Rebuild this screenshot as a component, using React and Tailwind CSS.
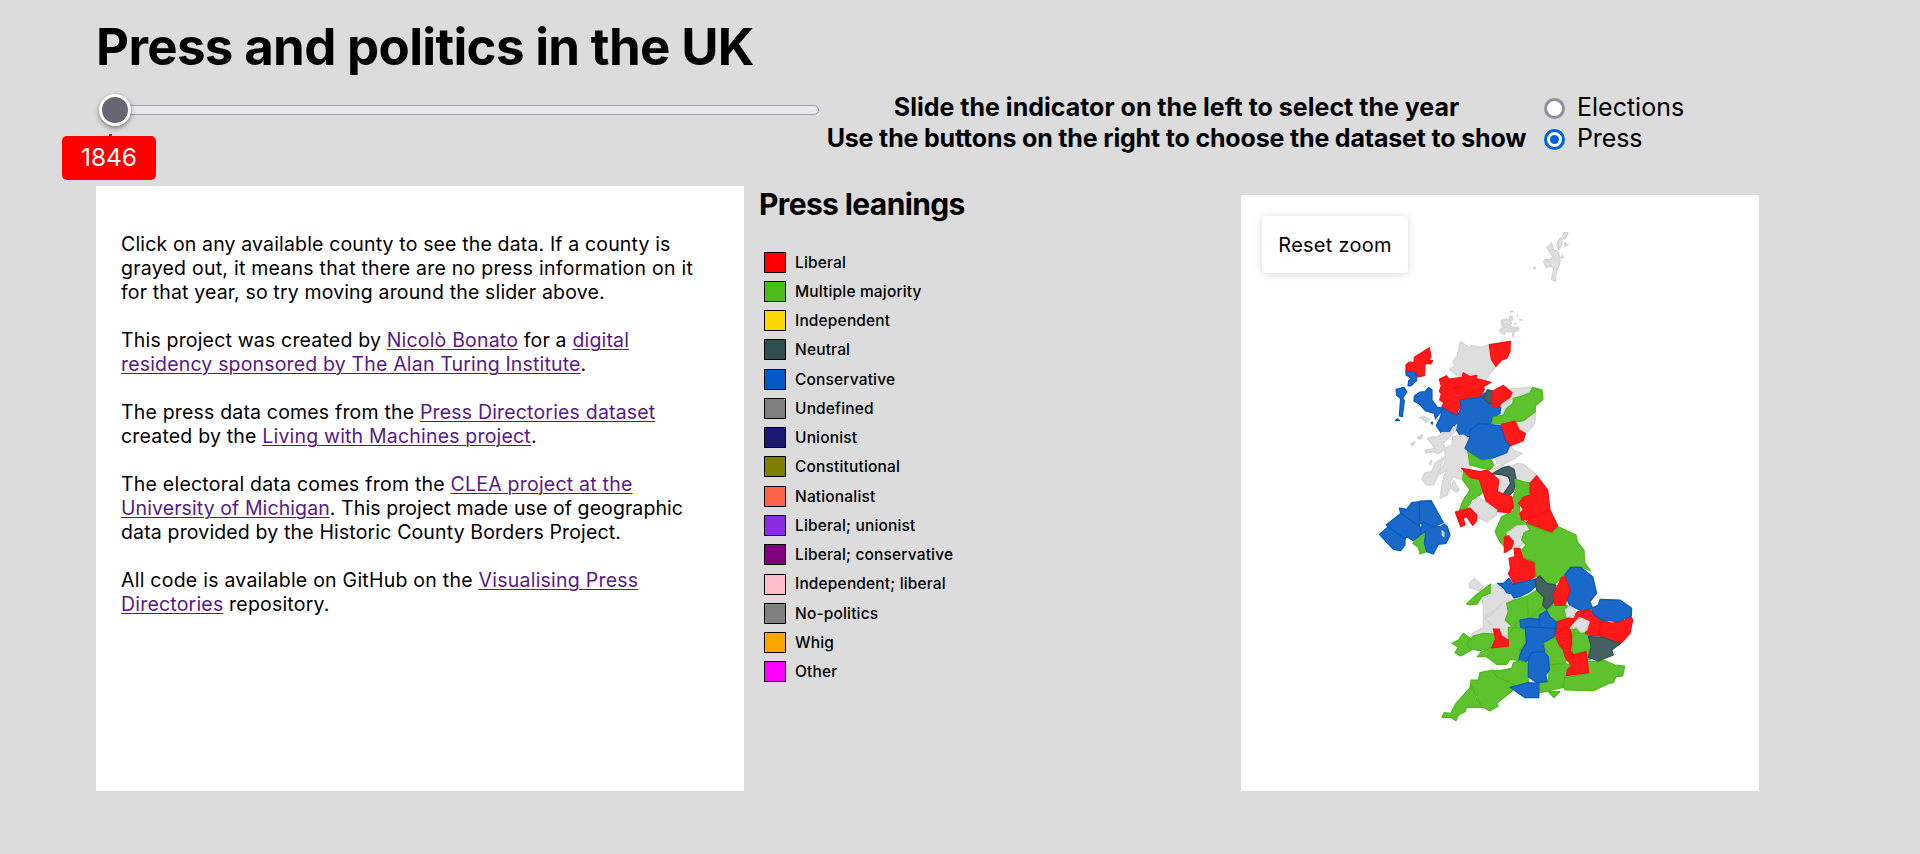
import React from 'react';

const FILL = { r: '#ff1919', b: '#1a69c9', g: '#5ec12e', n: '#446060', x: '#dedede' };
const STROKE = { r: '#ff0a0a', b: '#0059c4', g: '#4cba17', n: '#2f4f4f', x: '#d3d3d3' };

// Each sheet is a part of the map drawn on a grid of thirds of a pixel.
const SHEETS = [
  {
    x: 1240, y: 190, s: 0.338,
    shapes: [
      ['x', '958,126 971,126 960,146 953,140'],
      ['x', '945,143 953,143 952,165 943,177 937,163'],
      ['x', '960,155 971,161 960,168'],
      ['x', '907,168 916,164 922,156 928,178 938,180 947,200 945,222 936,240 933,270 921,265 929,232 918,225 905,228 898,212 905,205 918,206 926,196 914,182'],
      ['x', '949,200 953,193 958,200'],
      ['x', '870,226 875,230 870,235'],
      ['x', '800,358 808,358 808,361 800,361'],
      ['x', '797,374 807,374 807,385 797,385'],
      ['x', '827,382 835,385 828,386'],
      ['x', '810,398 817,393 813,399'],
      ['x', '820,369 821,375'],
      ['x', '773,388 787,380 800,390 798,402 826,411 818,418 785,415 766,418 776,408'],
    ],
  },
  {
    x: 1370, y: 320, s: 1 / 3,
    shapes: [
      ['x', '395,0 420,0 424,10 414,16 398,12'],
      ['x', '396,26 408,22 428,28 446,20 433,32 430,52 426,36 408,34 404,44 392,38'],
      ['x', '271,65 301,84 303,76 332,82 358,74 364,118 378,140 360,160 345,186 290,178 262,167 238,148 254,137 248,124 261,108'],
      ['r', '358,74 421,64 420,95 410,115 395,120 378,139 364,118'],
      ['r', '178,83 183,110 175,122 188,122 182,132 165,130 164,166 145,171 130,158 108,154 108,135 118,126 132,128 133,112'],
      ['b', '108,154 134,155 140,168 140,182 122,198 114,198 116,182 126,176 108,165'],
      ['b', '78,208 102,202 111,216 98,234 103,242 97,290 88,288 92,236 80,226'],
      ['b', '76,302 82,296 89,302'],
      ['b', '183,308 187,306 187,313'],
      ['b', '133,228 150,216 165,215 176,202 186,210 186,240 202,262 219,264 208,282 196,297 193,280 166,272 148,252 132,244'],
      ['x', '148,292 165,290 178,298 170,306 158,298'],
      ['r', '208,178 229,167 237,177 276,172 280,158 300,170 320,166 318,176 363,187 340,200 343,207 332,232 292,235 270,242 274,257 262,275 268,288 215,262 222,248 209,240 214,222 208,214 214,198'],
      ['r', '250,205 275,200 262,206'],
      ['r', '308,212 338,208'],
      ['x', '412,208 484,201 482,215 450,225 440,238 425,240 396,285 382,290 388,255 425,230 426,215'],
      ['x', '470,280 498,278 494,310 475,336 450,330 440,305'],
      ['b', '270,240 330,233 345,218 352,235 378,258 392,262 390,280 365,300 370,312 330,312 300,350 270,346 250,314 236,340 215,342 199,316 212,290 217,264 262,288 274,262'],
      ['n', '352,209 370,214 366,245 358,252 340,236'],
      ['r', '370,212 400,196 426,218 420,232 395,248 388,260 370,262 365,245'],
      ['g', '488,202 516,210 519,238 496,258 496,275 460,302 412,310 365,312 370,292 400,285 410,265 428,250 430,235 450,230 480,218'],
    ],
  },
  {
    x: 1370, y: 420, s: 1 / 3,
    shapes: [
      ['x', '165,90 195,85 172,56 190,50 203,52 215,38 240,38 260,14 256,34 220,70 225,88 205,102 190,95 168,100'],
      ['x', '142,52 156,44 158,52 148,58'],
      ['x', '122,72 134,64 128,78'],
      ['x', '178,128 186,120 182,136'],
      ['x', '248,50 280,45 300,58 285,85 295,125 305,145 275,150 275,180 250,170 240,185 242,200 232,225 210,236 215,200 222,168 230,150 205,166 190,195 170,195 155,178 165,158 185,155 195,130 222,112 205,158 225,128 225,85 245,75'],
      ['x', '252,180 258,195 268,210 258,217 242,205'],
      ['x', '378,115 410,100 420,80 440,95 458,100 425,120 400,134 378,130'],
      ['r', '393,14 435,3 447,30 466,40 460,62 420,78 400,55'],
      ['b', '325,12 390,16 400,40 408,65 420,75 410,98 375,112 335,123 302,100 285,85 300,52 300,30'],
      ['g', '293,95 335,122 362,118 372,135 362,148 340,146 300,135'],
      ['x', '425,140 440,130 460,132 498,163 480,190 435,180'],
      ['x', '388,165 415,165 424,180 402,224 380,214 388,190'],
      ['x', '366,148 395,135 405,140 372,160'],
      ['n', '365,162 395,145 415,138 432,148 440,185 430,215 418,226 398,225 422,190 415,170 395,164'],
      ['g', '435,178 460,185 485,190 484,212 465,235 448,255 450,280 458,300 478,315 440,320 410,342 403,380 390,365 375,335 395,290 430,272 428,235 438,205'],
      ['g', '280,155 300,172 328,178 345,210 325,230 305,240 295,262 268,270 280,240 300,210 278,180'],
      ['r', '275,145 330,155 352,150 370,165 386,180 382,215 400,222 425,230 430,262 418,278 385,275 350,250 338,210 328,178 300,172'],
      ['x', '325,230 345,245 380,270 380,285 350,306 320,290 295,262'],
      ['r', '256,276 300,264 320,285 320,302 308,316 290,290 280,295 285,315 272,320'],
      ['r', '480,190 500,167 533,210 540,270 472,300 455,300 450,280 460,268 446,250 460,232 480,225'],
      ['r', '540,270 565,322 545,340 470,310 478,296'],
      ['x', '410,340 440,318 470,315 482,332 465,350 462,370 440,385 428,365'],
      ['r', '403,352 415,347 430,365 425,385 403,398'],
      ['b', '48,315 92,280 148,315 158,340 130,362 110,350 105,358'],
      ['b', '28,343 55,320 105,358 105,375 92,392 70,388'],
      ['b', '88,264 110,268 125,248 150,245 148,318 92,280'],
      ['b', '150,243 184,242 220,308 190,320 148,310'],
      ['g', '128,370 168,332 168,370 170,395 150,402 145,382'],
      ['b', '158,306 190,320 215,318 222,312 232,320 240,345 228,370 205,373 190,402 170,395 163,370 168,332 150,345'],
      ['x', '216,332 222,338 222,350 217,346'],
    ],
  },
  {
    x: 1440, y: 540, s: 1 / 3,
    shapes: [
      ['x', '152,135 175,135 195,158 220,168 225,178 200,185 205,215 196,240 215,260 205,290 180,288 155,292 90,290 100,278 130,262 130,195 125,175 150,165'],
      ['x', '135,232 150,228 195,182'],
      ['x', '135,235 155,255'],
      ['x', '88,130 103,115 130,140 118,153 88,142'],
      ['g', '80,192 108,165 152,132 150,160 125,170 112,192 90,195'],
      ['r', '222,25 240,25 250,55 282,62 288,108 265,122 222,133 205,100 212,88 207,55 225,50'],
      ['b', '172,130 190,130 207,115 218,133 285,118 292,135 270,155 240,170 222,174 215,162 200,158 192,145'],
      ['g', '200,190 222,180 262,168 265,236 245,255 215,258 196,240 205,215'],
      ['g', '262,168 290,150 308,150 312,200 325,215 300,235 265,238'],
      ['g', '205,262 245,258 250,280 258,310 255,340 225,345 205,320'],
    ],
  },
  {
    x: 1530, y: 540, s: 1 / 3,
    shapes: [
      ['g', '30,205 110,195 178,290 182,360 60,365 -30,360 -45,250 -5,240'],
      ['g', '-10,-48 65,-20 85,-40 138,-15 142,5 162,30 164,68 182,93 150,80 122,80 104,103 75,133 45,125 18,108 15,65 -15,55 -25,30 -12,15 -25,0 -18,-22 0,-30'],
      ['n', '15,118 30,108 50,130 78,135 70,190 50,208 38,195 42,172 20,150'],
      ['g', '50,212 70,195 110,198 108,230 80,245 60,232'],
      ['g', '35,310 75,285 100,300 95,335 50,345'],
      ['g', '118,290 140,262 160,280 178,290 182,345 130,345'],
      ['b', '104,105 122,82 152,82 188,110 200,160 180,185 188,205 155,213 118,195 112,180 120,150'],
      ['r', '70,165 95,112 105,110 120,150 105,195 75,197'],
      ['r', '82,245 115,235 145,214 182,210 180,240 145,232 118,262 125,285 130,300 115,335 90,335 100,300 78,285'],
      ['r', '182,210 195,228 215,240 208,288 170,288 165,275 178,250 150,232 165,215'],
      ['r', '215,240 245,250 285,240 300,224 308,240 300,280 275,308 225,300 205,285'],
      ['b', '185,205 205,195 210,178 270,180 305,205 304,228 262,245 215,240 190,222'],
      ['x', '107,210 120,198 138,212 130,232 110,230'],
      ['x', '120,265 148,232 178,245 170,270 155,280 140,262'],
      ['b', '-30,240 0,235 28,238 32,300 5,305 10,335 -20,330 -10,290 -28,262'],
      ['b', '28,225 50,212 60,230 80,248 70,290 50,300 25,290'],
    ],
  },
  {
    x: 1430, y: 630, s: 1 / 3,
    shapes: [
      ['g', '66,40 85,30 100,10 120,25 115,48 125,60 92,78 75,68 85,52'],
      ['g', '110,40 130,18 160,10 192,12 200,22 185,52 150,62 120,56'],
      ['g', '142,80 155,66 185,50 235,45 238,10 250,-8 270,-5 288,0 285,40 268,65 270,92 240,88 230,103 200,103 170,80'],
      ['r', '190,-3 207,-3 215,18 235,30 236,48 185,54 197,28'],
      ['b', '285,-10 378,-5 372,20 340,38 345,65 305,68 290,95 265,95 275,60 290,40'],
      ['g', '120,180 123,150 145,150 150,128 188,120 200,140 295,158 240,170 248,182 200,220 205,228 180,243 155,230 140,195'],
      ['g', '36,262 42,248 62,250 78,220 125,168 138,200 155,232 110,232 105,245 85,255 78,272 62,262'],
      ['g', '184,122 210,122 245,115 250,98 270,92 295,100 295,155 262,168 235,155 205,142'],
      ['b', '240,172 295,158 330,160 326,203 285,203'],
      ['g', '342,40 375,25 390,45 405,62 412,85 405,100 357,105'],
      ['g', '357,105 405,100 425,105 405,145 400,172 330,188 330,160 355,155'],
      ['g', '405,142 476,130 472,95 505,93 520,90 555,105 584,108 578,138 558,140 550,158 538,160 490,182 405,180 400,165'],
      ['b', '305,68 340,65 355,80 358,120 348,135 352,155 320,158 295,140 295,85'],
      ['g', '430,10 460,10 480,20 484,55 470,65 430,70 425,50'],
      ['n', '475,20 520,22 545,32 572,40 545,60 550,75 505,93 475,82 484,50'],
      ['r', '375,12 395,0 410,-10 420,10 425,40 420,60 430,75 468,65 476,128 410,137 412,120 425,108 405,80 400,60 388,45'],
      ['g', '355,185 390,185 372,203'],
    ],
  },
];

const LEGEND = [
  ['bg-[#ff0000]', 'Liberal'],
  ['bg-[#4cba17]', 'Multiple majority'],
  ['bg-[#ffd700]', 'Independent'],
  ['bg-[#2f4f4f]', 'Neutral'],
  ['bg-[#0059c4]', 'Conservative'],
  ['bg-[#808080]', 'Undefined'],
  ['bg-[#191970]', 'Unionist'],
  ['bg-[#808000]', 'Constitutional'],
  ['bg-[#ff6347]', 'Nationalist'],
  ['bg-[#8a2be2]', 'Liberal; unionist'],
  ['bg-[#800080]', 'Liberal; conservative'],
  ['bg-[#ffc0cb]', 'Independent; liberal'],
  ['bg-[#808080]', 'No-politics'],
  ['bg-[#ffa500]', 'Whig'],
  ['bg-[#ff00ff]', 'Other'],
];

function Link({ children }) {
  return <a href="#" className="text-[#551a8b] underline decoration-1 underline-offset-2">{children}</a>;
}

function Line({ tracking, children }) {
  return <span className={`block whitespace-nowrap ${tracking}`}>{children}</span>;
}

function CountyMap() {
  return (
    <svg className="block h-full w-full" viewBox="1241 195 518 596">
      {SHEETS.map((sheet, i) => (
        <g key={i} transform={`translate(${sheet.x} ${sheet.y}) scale(${sheet.s})`}>
          {sheet.shapes.map(([c, points], j) => (
            <polygon key={j} points={points} fill={FILL[c]} stroke={STROKE[c]} strokeWidth="3.5" strokeLinejoin="round" />
          ))}
        </g>
      ))}
    </svg>
  );
}

export default function App() {
  return (
    <div className="h-[854px] w-[1920px] overflow-hidden bg-[#dcdcdc] pl-24 font-['Inter',sans-serif] text-black">
      <header className="h-[88px] pt-[17px]">
        <h1 className="text-[51px] leading-[60px] font-bold tracking-[-0.67px] whitespace-nowrap">Press and politics in the UK</h1>
      </header>

      <div className="flex h-[98px]">
        <div className="w-[730px]">
          <div className="relative mt-[17px] ml-[3px] h-[10px] w-[720px] rounded-full border border-[#9d9dab] bg-[#e9e9ed]">
            <div className="absolute -top-[12px] -left-px size-8 rounded-full border-[3px] border-white bg-[#676774] shadow-[0_2px_5px_rgba(0,0,0,0.45)]" />
            <div className="absolute top-[28px] left-[9px] h-[3px] w-[3px] bg-[#ff0000]" />
            <div className="absolute top-[30px] -left-[38px] h-11 w-[94px] rounded-[5px] bg-[#ff0000] text-center text-[24.5px] leading-[43px] text-white">1846</div>
          </div>
        </div>
        <div className="w-[701px] pt-[4px] text-center text-[25px] leading-[31px] font-bold whitespace-nowrap">
          <p>Slide the indicator on the left to select the year</p>
          <p className="tracking-[-0.17px]">Use the buttons on the right to choose the dataset to show</p>
        </div>
        <div className="ml-[17px] pt-[4px] text-[25px] leading-[31px]">
          <label className="flex items-center gap-3">
            <span className="mt-[2px] size-[21px] rounded-full border-[3px] border-[#8f8f9d] bg-white" />
            <span>Elections</span>
          </label>
          <label className="flex items-center gap-3">
            <span className="mt-[2px] flex size-[21px] items-center justify-center rounded-full border-[3px] border-[#0061e0] bg-white"><span className="size-[9px] rounded-full bg-[#0061e0]" /></span>
            <span className="tracking-[-0.1px]">Press</span>
          </label>
        </div>
      </div>

      <main className="flex items-start">
        <section className="h-[605px] w-[648px] bg-white px-[25px] pt-[46px] text-[19.5px] leading-6">
          <p className="mb-6">
            <Line tracking="tracking-[0.15px]">Click on any available county to see the data. If a county is</Line>
            <Line tracking="tracking-[0.24px]">grayed out, it means that there are no press information on it</Line>
            <Line tracking="tracking-[0.15px]">for that year, so try moving around the slider above.</Line>
          </p>
          <p className="mb-6">
            <Line tracking="tracking-[0.18px]">This project was created by <Link>Nicolò Bonato</Link> for a <Link>digital</Link></Line>
            <Line tracking="tracking-[0.17px]"><Link>residency sponsored by The Alan Turing Institute</Link>.</Line>
          </p>
          <p className="mb-6">
            <Line tracking="tracking-[0.18px]">The press data comes from the <Link>Press Directories dataset</Link></Line>
            <Line tracking="tracking-[0.19px]">created by the <Link>Living with Machines project</Link>.</Line>
          </p>
          <p className="mb-6">
            <Line tracking="tracking-[0.22px]">The electoral data comes from the <Link>CLEA project at the</Link></Line>
            <Line tracking="tracking-[0.09px]"><Link>University of Michigan</Link>. This project made use of geographic</Line>
            <Line tracking="tracking-[0.15px]">data provided by the Historic County Borders Project.</Line>
          </p>
          <p>
            <Line tracking="tracking-[0.24px]">All code is available on GitHub on the <Link>Visualising Press</Link></Line>
            <Line tracking="tracking-[0.2px]"><Link>Directories</Link> repository.</Line>
          </p>
        </section>

        <section className="w-[497px] pl-[14px]">
          <h2 className="pl-px text-[30px] leading-9 font-bold tracking-[-0.62px] whitespace-nowrap">Press leanings</h2>
          <ul className="mt-[25.5px] pl-[6px]">
            {LEGEND.map(([bg, label]) => (
              <li key={label} className="flex h-[29.27px] items-center gap-[9px] text-[15.5px] font-medium tracking-[0.16px]">
                <span className={`h-[21px] w-[22px] border border-black ${bg}`} />
                <span>{label}</span>
              </li>
            ))}
          </ul>
        </section>

        <section className="relative mt-[9px] h-[596px] w-[518px] bg-white">
          <CountyMap />
          <button className="absolute top-[21px] left-[21px] h-[57px] w-[146px] rounded bg-white text-[20px] tracking-[0.25px] shadow-[0_1px_8px_rgba(0,0,0,0.16)]">Reset zoom</button>
        </section>
      </main>
    </div>
  );
}
